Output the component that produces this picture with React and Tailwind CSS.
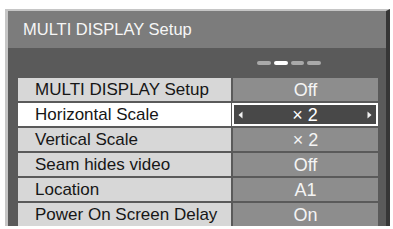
// MULTI DISPLAY Setup – on-screen menu panel

const rows = [
  { label: "MULTI DISPLAY Setup", value: "Off" },
  { label: "Horizontal Scale", value: "× 2", active: true },
  { label: "Vertical Scale", value: "× 2" },
  { label: "Seam hides video", value: "Off" },
  { label: "Location", value: "A1" },
  { label: "Power On Screen Delay", value: "On" },
];

function Arrow({ dir }) {
  return (
    <svg width="5" height="8" viewBox="0 0 5 8" className="shrink-0">
      {dir === "left" ? (
        <path d="M4.5 0.5 L0.5 4 L4.5 7.5 Z" fill="#f2f2f2" />
      ) : (
        <path d="M0.5 0.5 L4.5 4 L0.5 7.5 Z" fill="#f2f2f2" />
      )}
    </svg>
  );
}

function Row({ label, value, active }) {
  return (
    <div className="flex h-[23px] gap-[2px]">
      <div
        className={`flex w-[213px] items-center pl-[17px] text-[17px] leading-none text-[#161616] ${
          active ? "bg-white" : "bg-[#d7d7d7]"
        }`}
      >
        {label}
      </div>
      {active ? (
        <div className="-ml-[1px] flex flex-1 items-center justify-between border-2 border-white bg-[#484848] px-[4px] text-[18px] leading-none text-white">
          <Arrow dir="left" />
          <span>{value}</span>
          <Arrow dir="right" />
        </div>
      ) : (
        <div className="flex flex-1 items-center justify-center bg-[#8d8d8d] text-[18px] leading-none text-[#f4f4f4]">
          {value}
        </div>
      )}
    </div>
  );
}

export default function App() {
  return (
    <div
      className="h-[229px] w-[393px] overflow-hidden bg-white pl-[5px] pt-[9px]"
      style={{ fontFamily: '"Liberation Sans", Arial, sans-serif' }}
    >
      <div className="w-[385px] border-l-[3px] border-r-4 border-t-2 border-l-[#c6c6c6] border-r-[#363636] border-t-[#c6c6c6] bg-[#5a5a5a]">
        <div className="flex h-[37px] items-center bg-[#7c7c7c] pl-[15px] text-[16.5px] text-[#f6f6f6]">
          MULTI DISPLAY Setup
        </div>

        <div className="flex h-[30px] items-center justify-center gap-[3px] pl-[184px]">
          <span className="h-[4px] w-[14px] rounded-sm bg-[#a9a9a9]" />
          <span className="h-[4px] w-[14px] rounded-sm bg-white" />
          <span className="h-[4px] w-[13px] rounded-sm bg-[#a9a9a9]" />
          <span className="h-[4px] w-[14px] rounded-sm bg-[#a9a9a9]" />
        </div>

        <div className="flex flex-col gap-[2px] pl-[10px] pr-[8px]">
          {rows.map((r) => (
            <Row key={r.label} {...r} />
          ))}
        </div>
      </div>
    </div>
  );
}
